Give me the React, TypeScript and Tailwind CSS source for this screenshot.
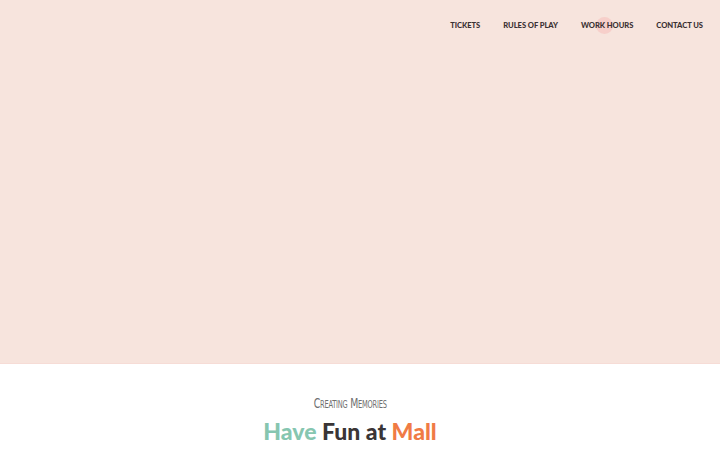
import React from 'react';

const links = ['TICKETS', 'RULES OF PLAY', 'WORK HOURS', 'CONTACT US'];

export default function App() {
  return (
    <div className="w-[720px] h-[450px] overflow-hidden bg-white" style={{ fontFamily: '"Open Sans", sans-serif' }}>
      {/* hero */}
      <div className="h-[364px] bg-[#f7e4dd] border-b border-[#f6dcd6]">
        <nav className="flex justify-end items-center gap-[23px] pr-[17px] pt-[20px]" style={{ fontFamily: '"Lato", sans-serif' }}>
          {links.map(l => (
            <a
              key={l}
              className="relative text-[7.6px] font-black tracking-[-0.05px] text-[#3b3133]"
            >
              {l === 'WORK HOURS' && (
                <span className="absolute left-[15px] top-[-3px] w-[17px] h-[17px] rounded-full bg-[#f7c6c2] opacity-70" />
              )}
              <span className="relative">{l}</span>
            </a>
          ))}
        </nav>
      </div>

      {/* intro */}
      <div className="flex flex-col items-center pt-[32px] pr-[20px]">
        <p
          className="text-[14px] text-[#6f6f6f] leading-none tracking-[-0.3px]"
          style={{ fontFamily: '"DejaVu Sans Condensed", "Liberation Sans Narrow", sans-serif', fontVariant: 'small-caps', fontStretch: 'condensed', transform: 'scaleX(0.74)' }}
        >
          Creating Memories
        </p>
        <h1
          className="mt-[10px] text-[23px] font-black leading-none"
          style={{ fontFamily: '"Lato", sans-serif' }}
        >
          <span className="text-[#86c6b0]">Have</span>{' '}
          <span className="text-[#3a3536]">Fun at</span>{' '}
          <span className="text-[#f07b45]">Mall</span>
        </h1>
      </div>
    </div>
  );
}
